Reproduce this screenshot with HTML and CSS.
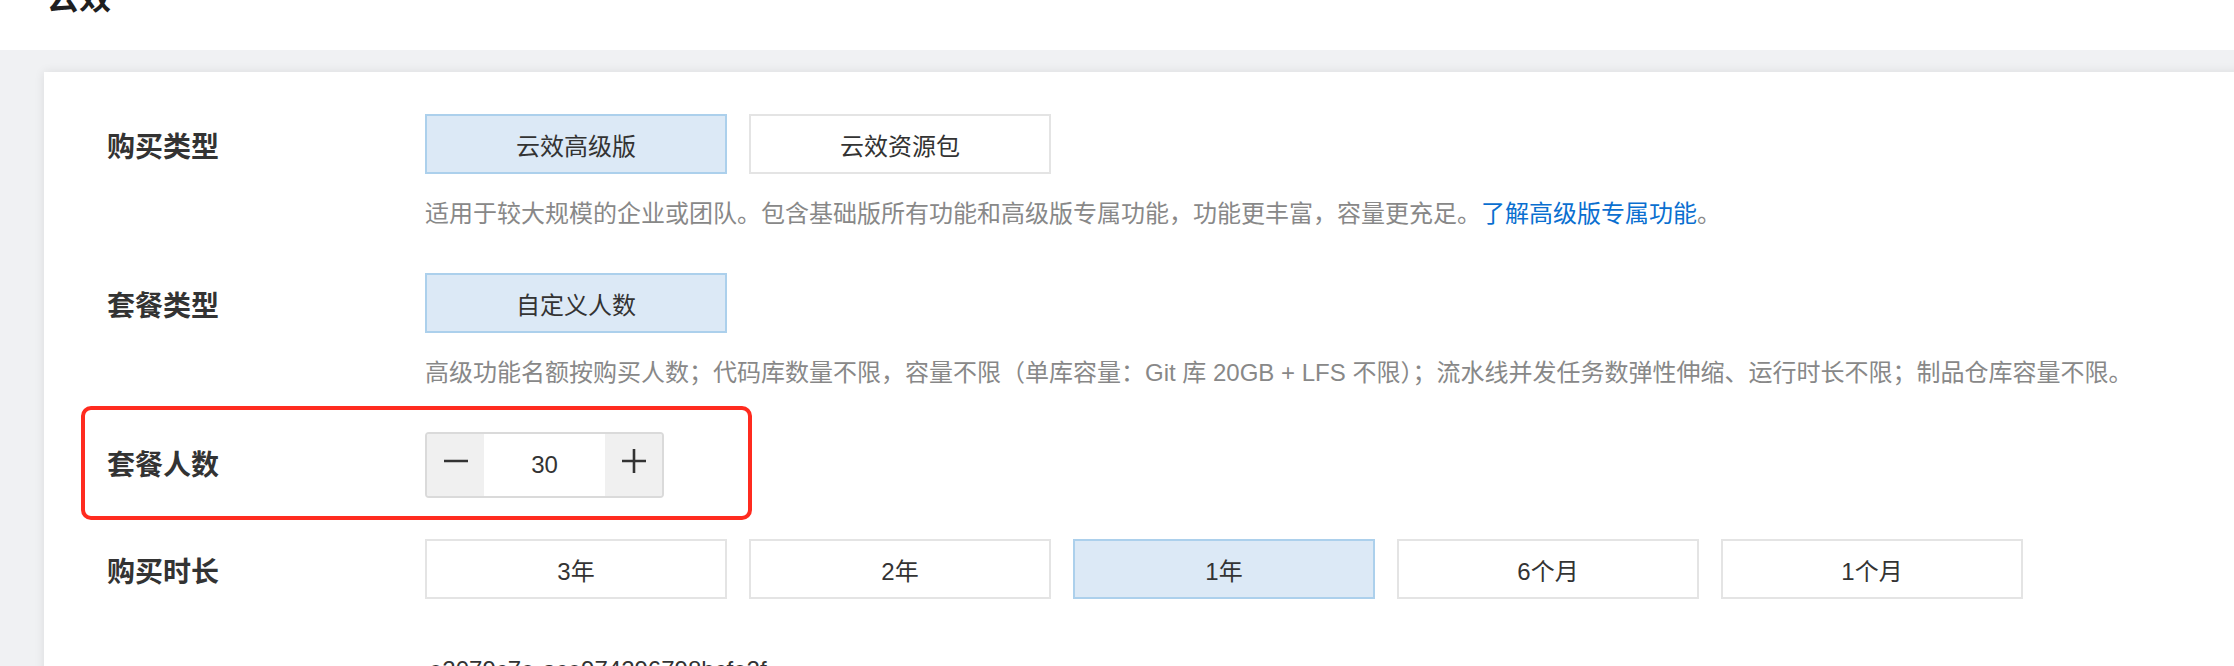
FILE: index.html
```html
<!DOCTYPE html>
<html lang="zh-CN">
<head>
<meta charset="utf-8">
<title>云效</title>
<link rel="stylesheet" href="styles.css">
</head>
<body>
<header class="page-header">
  <h1 class="page-title">云效</h1>
</header>
<main class="page-body">
  <section class="card">
    <div class="row">
      <div class="row-label">购买类型</div>
      <div class="row-field">
        <div class="options">
          <div class="option is-active">云效高级版</div>
          <div class="option">云效资源包</div>
        </div>
        <p class="hint">适用于较大规模的企业或团队。包含基础版所有功能和高级版专属功能，功能更丰富，容量更充足。<a class="hint-link">了解高级版专属功能</a>。</p>
      </div>
    </div>

    <div class="row">
      <div class="row-label">套餐类型</div>
      <div class="row-field">
        <div class="options">
          <div class="option is-active">自定义人数</div>
        </div>
        <p class="hint">高级功能名额按购买人数；代码库数量不限，容量不限（单库容量：Git 库 20GB + LFS 不限）；流水线并发任务数弹性伸缩、运行时长不限；制品仓库容量不限。</p>
      </div>
    </div>

    <div class="row row-marked">
      <div class="highlight"></div>
      <div class="row-label">套餐人数</div>
      <div class="row-field">
        <div class="stepper">
          <div class="stepper-btn">
            <svg width="26" height="26" viewBox="0 0 26 26"><path d="M1 13H25" stroke="#333" stroke-width="2.6" fill="none"/></svg>
          </div>
          <div class="stepper-value">30</div>
          <div class="stepper-btn">
            <svg width="26" height="26" viewBox="0 0 26 26"><path d="M1 13H25M13 1V25" stroke="#333" stroke-width="2.6" fill="none"/></svg>
          </div>
        </div>
      </div>
    </div>

    <div class="row">
      <div class="row-label">购买时长</div>
      <div class="row-field">
        <div class="options">
          <div class="option">3年</div>
          <div class="option">2年</div>
          <div class="option is-active">1年</div>
          <div class="option">6个月</div>
          <div class="option">1个月</div>
        </div>
      </div>
    </div>

    <div class="row">
      <div class="row-label"></div>
      <div class="row-field">
        <div class="value-text">e2079c7e-ace974296798bcfe2f</div>
      </div>
    </div>
  </section>
</main>
</body>
</html>
```

FILE: styles.css
```css
html, body {
  margin: 0;
  padding: 0;
}

body {
  background: #f0f1f3;
  font-family: "Liberation Sans", "Noto Sans CJK SC", sans-serif;
  overflow: hidden;
  width: 2234px;
  height: 666px;
}

.page-header {
  height: 50px;
  background: #ffffff;
  padding-left: 47px;
  overflow: hidden;
}

.page-title {
  margin: -18px 0 0;
  font-size: 32px;
  line-height: 32px;
  font-weight: bold;
  color: #1f1f1f;
}

.page-body {
  padding: 22px 0 0 44px;
}

.card {
  background: #ffffff;
  margin-right: -60px;
  padding: 42px 0 40px 63px;
  box-shadow: 0 0 10px rgba(0, 0, 0, 0.09);
  min-height: 700px;
}

.row {
  display: flex;
  margin-bottom: 41px;
}

.row-marked {
  position: relative;
}

.row-label {
  width: 318px;
  flex: none;
  box-sizing: border-box;
  padding-top: 8px;
  font-size: 28px;
  line-height: 52px;
  font-weight: bold;
  color: #333333;
}

.row-field {
  flex: 1;
}

.options {
  display: flex;
  gap: 22px;
}

.option {
  width: 302px;
  height: 60px;
  box-sizing: border-box;
  border: 2px solid #e4e4e4;
  background: #ffffff;
  display: flex;
  align-items: center;
  justify-content: center;
  font-size: 24px;
  color: #333333;
}

.option.is-active {
  background: #dce9f6;
  border-color: #acd0ec;
}

.hint {
  margin: 22px 0 0;
  font-size: 24px;
  line-height: 36px;
  color: #888888;
  white-space: nowrap;
}

.hint-link {
  color: #0a6fd0;
  text-decoration: none;
}

.stepper {
  display: flex;
  width: 239px;
  height: 66px;
  box-sizing: border-box;
  border: 2px solid #dadada;
  border-radius: 4px;
  overflow: hidden;
}

.stepper-btn {
  width: 57px;
  flex: none;
  background: #f0f0f0;
  display: flex;
  align-items: center;
  justify-content: center;
}

.stepper-btn svg {
  margin-bottom: 8px;
}

.stepper-value {
  flex: 1;
  background: #ffffff;
  display: flex;
  align-items: center;
  justify-content: center;
  font-size: 24px;
  color: #333333;
}

.highlight {
  position: absolute;
  left: -26px;
  top: -26px;
  width: 671px;
  height: 114px;
  box-sizing: border-box;
  border: 4px solid #ff2b1f;
  border-radius: 10px;
  pointer-events: none;
}

.value-text {
  font-size: 24px;
  line-height: 60px;
  color: #333333;
  padding-left: 4px;
}
```
